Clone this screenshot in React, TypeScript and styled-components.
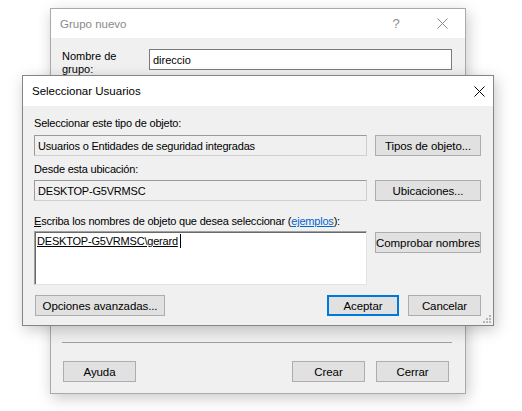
import styled, { createGlobalStyle } from "styled-components"

const GlobalStyle = createGlobalStyle`
  html, body {
    margin: 0;
    padding: 0;
    background: #ffffff;
  }
  body {
    font-family: "Liberation Sans", Arial, sans-serif;
    font-size: 11px;
    color: #000;
  }
`

const Desktop = styled.div`
  position: relative;
  width: 522px;
  height: 411px;
  overflow: hidden;
  background: #ffffff;
`

const Window = styled.div<{ $left: number; $top: number; $width: number; $height: number; $active?: boolean }>`
  position: absolute;
  left: ${p => p.$left}px;
  top: ${p => p.$top}px;
  width: ${p => p.$width}px;
  height: ${p => p.$height}px;
  box-sizing: border-box;
  border: 1px solid ${p => (p.$active ? "#858585" : "#aaaaaa")};
  background: #f0f0f0;
  box-shadow: 2px 4px 14px rgba(0, 0, 0, 0.22);
  display: flex;
  flex-direction: column;
`

const TitleBar = styled.div<{ $height: number; $active?: boolean }>`
  height: ${p => p.$height}px;
  flex: none;
  background: #ffffff;
  display: flex;
  align-items: center;
  padding-left: 9px;
  color: ${p => (p.$active ? "#000000" : "#8a8a8a")};
  font-size: 11.5px;
`

const TitleText = styled.span`
  flex: 1;
`

const CaptionButton = styled.div<{ $width: number }>`
  width: ${p => p.$width}px;
  height: 100%;
  display: flex;
  align-items: center;
  justify-content: center;
  font-size: 13px;
`

const BackBody = styled.div`
  flex: 1;
  display: flex;
  flex-direction: column;
  padding: 11px 0 11px 0;
`

const NameRow = styled.div`
  display: flex;
  align-items: flex-start;
  padding-left: 11px;
`

const NameLabel = styled.div`
  width: 87px;
  line-height: 13px;
  padding-top: 1px;
`

const TextBox = styled.div`
  width: 303px;
  height: 21px;
  box-sizing: border-box;
  border: 1px solid #7a7a7a;
  background: #ffffff;
  display: flex;
  align-items: center;
  padding-left: 3px;
`

const Footer = styled.div`
  margin-top: auto;
`

const Separator = styled.div`
  height: 1px;
  background: #a0a0a0;
  margin: 0 13px 0 11px;
`

const FooterButtons = styled.div`
  display: flex;
  gap: 11px;
  margin-top: 18px;
  padding: 0 16px 0 12px;
`

const Spacer = styled.div`
  flex: 1;
`

const Button = styled.div<{ $width: number; $default?: boolean }>`
  width: ${p => p.$width}px;
  height: 21px;
  box-sizing: border-box;
  flex: none;
  background: #e1e1e1;
  border: ${p => (p.$default ? "2px solid #0078d7" : "1px solid #adadad")};
  display: flex;
  align-items: center;
  justify-content: center;
  white-space: nowrap;
  font-size: 11.5px;
  letter-spacing: -0.1px;
`

const FrontBody = styled.div`
  position: relative;
  flex: 1;
  padding: 10px 11px 9px 11px;
  display: grid;
  grid-template-columns: 333px 106px;
  column-gap: 8px;
  align-content: start;
`

const Label = styled.div<{ $top: number; $bottom: number }>`
  grid-column: 1 / span 2;
  line-height: 14px;
  margin-top: ${p => p.$top}px;
  margin-bottom: ${p => p.$bottom}px;
  white-space: nowrap;
  letter-spacing: -0.2px;
`

const Underlined = styled.span`
  text-decoration: underline;
`

const Link = styled.span`
  color: #0066cc;
  text-decoration: underline;
`

const ReadOnlyField = styled.div`
  height: 21px;
  box-sizing: border-box;
  border: 1px solid #9a9a9a;
  border-right-color: #cfcfcf;
  border-bottom-color: #cfcfcf;
  background: #f0f0f0;
  display: flex;
  align-items: center;
  padding-left: 3px;
  white-space: nowrap;
  letter-spacing: -0.2px;
`

const NamesBox = styled.div`
  height: 54px;
  box-sizing: border-box;
  background: #ffffff;
  border: 1px solid #a0a0a0;
  border-right-color: #e3e3e3;
  border-bottom-color: #e3e3e3;
  box-shadow: inset 1px 1px 0 #6a6a6a;
  padding: 2px 0 0 2px;
  display: flex;
  align-items: flex-start;
  line-height: 14px;
  letter-spacing: -0.2px;
`

const Resolved = styled.span`
  text-decoration: underline;
`

const Caret = styled.span`
  display: inline-block;
  width: 1px;
  height: 14px;
  background: #000;
  margin-left: 2px;
`

const SideButton = styled.div`
  align-self: start;
  margin-top: 1px;
`

const BottomRow = styled.div`
  grid-column: 1 / span 2;
  display: flex;
  gap: 9px;
  margin-top: 10px;
  padding-left: 1px;
`

const Grip = styled.svg`
  position: absolute;
  right: 1px;
  bottom: 1px;
`

const CloseIcon = ({ color }: { color: string }) => (
  <svg width="11" height="11" viewBox="0 0 11 11">
    <path d="M0.5 0.5 L10.5 10.5 M10.5 0.5 L0.5 10.5" stroke={color} strokeWidth="1" fill="none" />
  </svg>
)

const App = () => {
  return (
    <Desktop>
      <GlobalStyle />
      <Window $left={50} $top={8} $width={416} $height={386}>
        <TitleBar $height={29}>
          <TitleText>Grupo nuevo</TitleText>
          <CaptionButton $width={46} style={{ color: "#8a8a8a" }}>?</CaptionButton>
          <CaptionButton $width={46}>
            <CloseIcon color="#8a8a8a" />
          </CaptionButton>
        </TitleBar>
        <BackBody>
          <NameRow>
            <NameLabel>
              Nombre de
              <br />
              grupo:
            </NameLabel>
            <TextBox>direccio</TextBox>
          </NameRow>
          <Footer>
            <Separator />
            <FooterButtons>
              <Button $width={73}>Ayuda</Button>
              <Spacer />
              <Button $width={73}>Crear</Button>
              <Button $width={73}>Cerrar</Button>
            </FooterButtons>
          </Footer>
        </BackBody>
      </Window>

      <Window $left={22} $top={75} $width={472} $height={251} $active>
        <TitleBar $height={30} $active>
          <TitleText>Seleccionar Usuarios</TitleText>
          <CaptionButton $width={28}>
            <CloseIcon color="#000000" />
          </CaptionButton>
        </TitleBar>
        <FrontBody>
          <Label $top={0} $bottom={5}>Seleccionar este tipo de objeto:</Label>
          <ReadOnlyField>Usuarios o Entidades de seguridad integradas</ReadOnlyField>
          <Button $width={106}>Tipos de objeto...</Button>

          <Label $top={6} $bottom={4}>Desde esta ubicación:</Label>
          <ReadOnlyField>DESKTOP-G5VRMSC</ReadOnlyField>
          <Button $width={106}>Ubicaciones...</Button>

          <Label $top={13} $bottom={3}>
            <Underlined>E</Underlined>scriba los nombres de objeto que desea seleccionar (<Link>ejemplos</Link>):
          </Label>
          <NamesBox>
            <Resolved>DESKTOP-G5VRMSC\gerard</Resolved>
            <Caret />
          </NamesBox>
          <SideButton>
            <Button $width={106}>Comprobar nombres</Button>
          </SideButton>

          <BottomRow>
            <Button $width={130}>Opciones avanzadas...</Button>
            <Spacer />
            <Button $width={72} $default>Aceptar</Button>
            <Button $width={73}>Cancelar</Button>
          </BottomRow>

          <Grip width="10" height="10" viewBox="0 0 10 10">
            <rect x="7" y="1" width="2" height="2" fill="#b8b8b8" />
            <rect x="4" y="4" width="2" height="2" fill="#b8b8b8" />
            <rect x="7" y="4" width="2" height="2" fill="#b8b8b8" />
            <rect x="1" y="7" width="2" height="2" fill="#b8b8b8" />
            <rect x="4" y="7" width="2" height="2" fill="#b8b8b8" />
            <rect x="7" y="7" width="2" height="2" fill="#b8b8b8" />
          </Grip>
        </FrontBody>
      </Window>
    </Desktop>
  )
}

export default App
